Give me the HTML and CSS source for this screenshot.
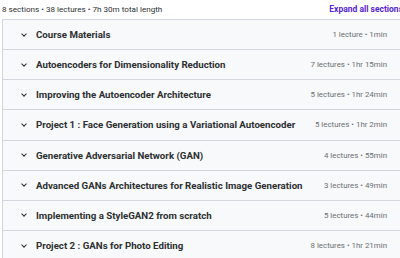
FILE: index.html
```html
<!DOCTYPE html>
<html>
  <head>
    <title>Course content</title>
    <link rel="stylesheet" href="styles.css">
  </head>
  <body>
    <div class="curriculum">
      <div class="summary">
        <span class="totals">8 sections • 38 lectures • 7h 30m total length</span>
        <button class="expand-all">Expand all sections</button>
      </div>
      <ul class="sections">
        <li class="section"><span class="chevron"></span><span class="title">Course Materials</span><span class="meta">1 lecture • 1min</span></li>
        <li class="section"><span class="chevron"></span><span class="title">Autoencoders for Dimensionality Reduction</span><span class="meta">7 lectures • 1hr 15min</span></li>
        <li class="section"><span class="chevron"></span><span class="title">Improving the Autoencoder Architecture</span><span class="meta">5 lectures • 1hr 24min</span></li>
        <li class="section"><span class="chevron"></span><span class="title">Project 1 : Face Generation using a Variational Autoencoder</span><span class="meta">5 lectures • 1hr 2min</span></li>
        <li class="section"><span class="chevron"></span><span class="title">Generative Adversarial Network (GAN)</span><span class="meta">4 lectures • 55min</span></li>
        <li class="section"><span class="chevron"></span><span class="title">Advanced GANs Architectures for Realistic Image Generation</span><span class="meta">3 lectures • 49min</span></li>
        <li class="section"><span class="chevron"></span><span class="title">Implementing a StyleGAN2 from scratch</span><span class="meta">5 lectures • 44min</span></li>
        <li class="section"><span class="chevron"></span><span class="title">Project 2 : GANs for Photo Editing</span><span class="meta">8 lectures • 1hr 21min</span></li>
      </ul>
    </div>
  </body>
</html>
```

FILE: styles.css
```css
* {
  margin: 0;
  padding: 0;
  box-sizing: border-box;
}

html, body {
  height: 100%;
  overflow: hidden;
}

body {
  font-family: Roboto, 'Liberation Sans', sans-serif;
  background: #ffffff;
  color: #2d2f31;
}

.curriculum {
  width: 416px;
  margin-left: 2px;
}

.summary {
  display: flex;
  align-items: center;
  width: 401px;
  height: 19px;
  padding-bottom: 2px;
}

.totals {
  font-size: 8.1px;
  color: #2d2f31;
}

.expand-all {
  margin-left: auto;
  padding: 0;
  background: none;
  border: none;
  font-family: inherit;
  font-size: 8.5px;
  font-weight: 700;
  color: #5624d0;
  white-space: nowrap;
}

.sections {
  list-style: none;
  width: 414px;
  border: 1px solid #d1d7dc;
  border-bottom: none;
}

.section {
  display: flex;
  align-items: center;
  height: 30.15px;
  padding: 0 28px 0 17px;
  background: #f7f9fa;
  border-bottom: 1px solid #d1d7dc;
}

.chevron {
  width: 4px;
  height: 4px;
  border-right: 1.1px solid #2d2f31;
  border-bottom: 1.1px solid #2d2f31;
  transform: rotate(45deg);
  margin: -2px 10px 0 2px;
}

.title {
  flex: 1;
  font-size: 9.7px;
  font-weight: 700;
  white-space: nowrap;
}

.meta {
  font-size: 7.9px;
  color: #6a6f73;
  white-space: nowrap;
}
```
